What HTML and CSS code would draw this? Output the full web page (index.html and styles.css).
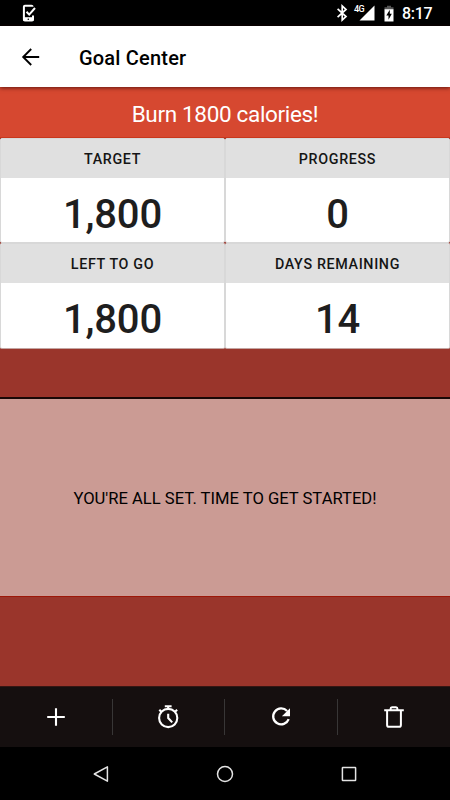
FILE: index.html
```html
<!DOCTYPE html>
<html lang="en">
<head>
<meta charset="utf-8">
<title>Goal Center</title>
<link rel="stylesheet" href="styles.css">
</head>
<body>
<div class="screen">
  <header class="status">
    <svg class="status-app" width="16" height="20" viewBox="0 0 16 20"><path d="M11.5 3.7V3.2Q11.5 2.7 10.5 2.7H3.9Q2.9 2.7 2.9 3.7V16.4Q2.9 17.4 3.9 17.4H11Q12 17.4 12 16.4V12.5" fill="none" stroke="#fff" stroke-width="2"/><path d="M2.2 14.2H12.6V17.7H2.2z" fill="#fff"/><circle cx="7.3" cy="16.2" r=".8" fill="#000"/><path d="M5.5 8.7L8.2 11.6L14 5" fill="none" stroke="#fff" stroke-width="2"/></svg>
    <div class="status-right">
      <svg width="12" height="18" viewBox="0 0 12 18"><path d="M1.6 4.8L10 12.6L6.2 16V2L10 5.4L1.6 13.2" fill="none" stroke="#fff" stroke-width="1.7"/></svg>
      <div class="signal"><span class="network">4G</span><svg width="16" height="16" viewBox="0 0 16 16"><path d="M15.5 .5V15.5H.5z" fill="#fff"/></svg></div>
      <svg class="battery" width="10" height="17" viewBox="0 0 10 17"><path d="M3 .8H7V2.2H9.5V4.5H.5V2.2H3z" fill="#555"/><path d="M.5 4.2H9.5V16.5H.5z" fill="#fff"/><path d="M5.8 4.8L2.3 10.5H4.5V14.8L7.8 8.8H5.8z" fill="#000"/></svg>
      <span class="clock">8:17</span>
    </div>
  </header>
  <div class="appbar">
    <svg width="20" height="20" viewBox="0 0 20 20"><path d="M18.2 10H2.5M10.2 2L2.2 10L10.2 18" fill="none" stroke="#000" stroke-width="1.9"/></svg>
    <h1>Goal Center</h1>
  </div>
  <main>
    <div class="goal">Burn 1800 calories!</div>
    <div class="stats">
      <section class="card"><h2>TARGET</h2><p>1,800</p></section>
      <section class="card"><h2>PROGRESS</h2><p>0</p></section>
      <section class="card"><h2>LEFT TO GO</h2><p>1,800</p></section>
      <section class="card"><h2>DAYS REMAINING</h2><p>14</p></section>
    </div>
    <div class="message"><span>YOU'RE ALL SET. TIME TO GET STARTED!</span></div>
  </main>
  <div class="toolbar">
    <div class="tool"><svg width="26" height="26" viewBox="0 0 26 26"><path d="M13 4.2V21.8M4.2 13H21.8" fill="none" stroke="#fff" stroke-width="2.1"/></svg></div>
    <div class="tool"><svg width="26" height="26" viewBox="0 0 26 26" fill="none" stroke="#fff" stroke-width="2.1"><circle cx="13.2" cy="14" r="9.1"/><path d="M9.8 2.3H16.6M13.2 2V5M4.3 5.8L6.5 8M22.1 5.8L19.9 8M13.2 9.8V14L17.2 18.4"/></svg></div>
    <div class="tool"><svg width="26" height="26" viewBox="0 0 26 26"><path d="M19.1 7A8 8 0 1 0 20.7 15.2" fill="none" stroke="#fff" stroke-width="2.3"/><path d="M22 4.2V12.3H13.9z" fill="#fff"/></svg></div>
    <div class="tool"><svg width="26" height="26" viewBox="0 0 26 26" fill="none" stroke="#fff" stroke-width="2"><path d="M3.2 6.3H22.8M9.6 6V4.8Q9.6 3.3 11 3.3H15Q16.4 3.3 16.4 4.8V6M6.1 6.5V20.9Q6.1 22.8 8 22.8H18Q19.9 22.8 19.9 20.9V6.5"/></svg></div>
  </div>
  <nav class="nav">
    <svg width="18" height="18" viewBox="0 0 18 18"><path d="M15.4 1.8V16.2L2.3 9z" fill="none" stroke="#e4e4e4" stroke-width="1.5" stroke-linejoin="round"/></svg>
    <svg width="18" height="18" viewBox="0 0 18 18"><circle cx="9" cy="9" r="7.5" fill="none" stroke="#e4e4e4" stroke-width="1.5"/></svg>
    <svg width="18" height="18" viewBox="0 0 18 18"><rect x="2.4" y="2.4" width="13.2" height="13.2" rx=".5" fill="none" stroke="#e4e4e4" stroke-width="1.5"/></svg>
  </nav>
</div>
</body>
</html>
```
FILE: styles.css
```css
* { box-sizing: border-box; }
body, h1, h2, p { margin: 0; }
body { background: #000; font-family: Roboto, "Liberation Sans", sans-serif; }
svg { display: block; flex: none; }
.screen { width: 450px; height: 800px; display: flex; flex-direction: column; overflow: hidden; }
.status { height: 26px; flex: none; display: flex; justify-content: space-between; align-items: center; padding: 0 17px 0 21px; background: #000; color: #fff; }
.status-right { display: flex; align-items: center; }
.signal { display: flex; align-items: center; margin-left: 6px; }
.network { width: 5px; overflow: visible; white-space: nowrap; font-size: 9px; font-weight: 500; line-height: 10px; letter-spacing: -.5px; margin-bottom: 8px; }
.battery { margin-left: 9px; }
.clock { width: 31px; margin-left: 8px; font-size: 16px; font-weight: 500; line-height: 26px; padding-top: 1px; letter-spacing: -.3px; white-space: nowrap; }
.appbar { position: relative; z-index: 1; height: 61px; flex: none; display: flex; align-items: center; padding: 0 21px; gap: 38px; background: #fff; box-shadow: 0 1px 4px rgba(50, 0, 0, .7); }
.appbar h1 { font-size: 20px; font-weight: 500; line-height: 24px; letter-spacing: .2px; color: #000; padding-top: 2px; }
main { flex: 1; display: flex; flex-direction: column; background: #9a352b; }
.goal { height: 51px; flex: none; padding-top: 2px; background: #d64830; border-bottom: 1px solid #c9371c; color: #fff; font-size: 22.5px; letter-spacing: -.33px; line-height: 50px; text-align: center; }
.stats { display: grid; grid-template-columns: 1fr 1fr; grid-template-rows: 105px 106px; }
.card { border: 1px solid #d8d8d8; border-radius: 2px; background: #fff; overflow: hidden; text-align: center; }
.card:nth-child(n+3) { border-bottom-color: #c3a5a2; }
.card h2 { height: 39px; background: #e0e0e0; color: #151515; font-size: 14.3px; font-weight: 500; line-height: 41px; letter-spacing: .65px; }
.card p { color: #1e1e1e; font-size: 40px; font-weight: 500; line-height: 73px; letter-spacing: -.2px; }
.message { height: 200px; margin-top: 48px; display: flex; align-items: center; justify-content: center; padding-top: 2px; background: #cb9b94; border-top: 2px solid #190806; border-bottom: 1px solid #9d1708; color: #000; font-size: 16.6px; line-height: 20px; }
.toolbar { height: 61px; flex: none; display: grid; grid-template-columns: repeat(4, 1fr); align-items: center; background: #150f0f; border-top: 1px solid #351613; }
.tool { height: 36px; display: flex; align-items: center; justify-content: center; border-right: 1px solid #383636; }
.tool:last-child { border-right: 0; }
.nav { height: 53px; flex: none; display: flex; align-items: center; justify-content: center; gap: 106px; background: #000; }
```
